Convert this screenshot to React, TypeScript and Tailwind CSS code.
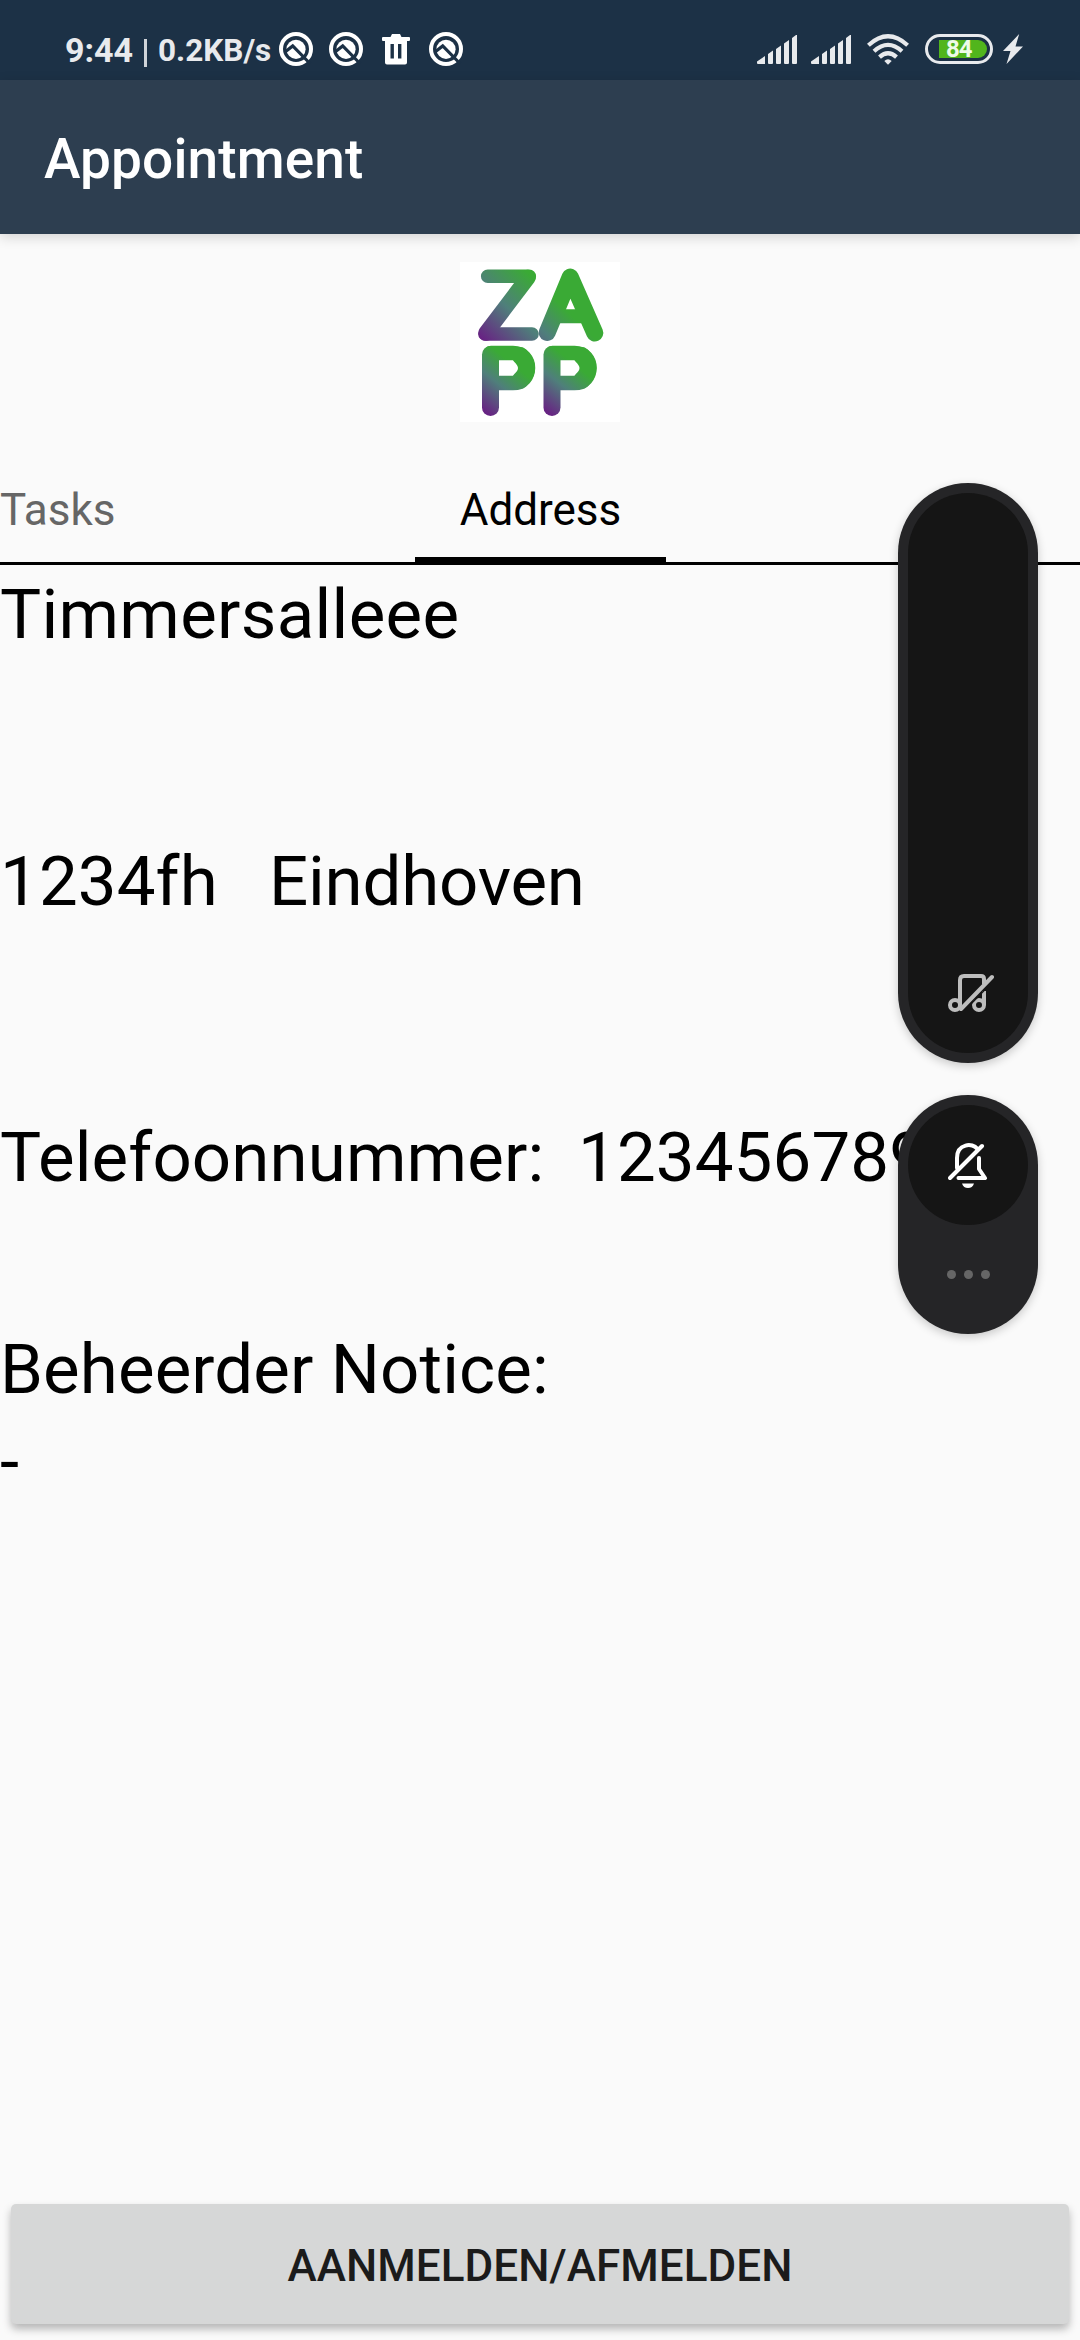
import React from "react";

function QIcon({ className = "" }: { className?: string }) {
  return (
    <svg viewBox="0 0 34 34" className={`h-[34px] w-[34px] shrink-0 ${className}`}>
      <circle cx="17" cy="17" r="15" fill="none" stroke="#fff" strokeWidth="4" />
      <circle cx="17" cy="17.300" r="9.600" fill="#fff" />
      <path d="M6 20 13.700 14 31 31.500" fill="none" stroke="#1c3146" strokeWidth="3.200" />
    </svg>
  );
}

function TrashIcon() {
  return (
    <svg viewBox="0 0 28 31" className="h-[31px] w-7 shrink-0">
      <path
        fillRule="evenodd"
        fill="#fff"
        d="M10 0h8l1.500 3H27q1 0 1 1v2q0 1-1 1h-2v21.500q0 2-2 2H5q-2 0-2-2V7H1Q0 7 0 6V4q0-1 1-1h7.500ZM8.500 10v14.500h3.400V10ZM16 10v14.500h3.400V10Z"
      />
    </svg>
  );
}

function Signal() {
  return (
    <svg viewBox="0 0 40 29" className="h-[29px] w-10 shrink-0" fill="#e8eaed">
      <path d="M0 26.500 8 21v8H1q-1 0-1-1ZM11 19l5-3.500V28q0 1-1 1h-3q-1 0-1-1ZM19 14l5-3.500V28q0 1-1 1h-3q-1 0-1-1ZM27 8.500 32 5v23q0 1-1 1h-3q-1 0-1-1ZM35 3l4-3h1v28q0 1-1 1h-3q-1 0-1-1Z" />
    </svg>
  );
}

function Wifi() {
  return (
    <svg viewBox="0 0 42 31" className="h-[31px] w-[42px] shrink-0" fill="none" stroke="#e8eaed" strokeWidth="4.200">
      <path d="M1.400 11.200Q21-6.800 40.600 11.200M7 17.200Q21 4.500 35 17.200M12.500 23.100Q21 15.400 29.500 23.100" />
      <path d="M17.300 27Q21 23.700 24.700 27L21 30.700Z" fill="#e8eaed" stroke="none" />
    </svg>
  );
}

function Battery() {
  return (
    <div className="flex h-[30px] w-[68px] shrink-0 items-center rounded-full border-[3px] border-[#e8eaed] pl-[11px]">
      <div className="flex h-[18px] w-12 items-center rounded-l-[2px] rounded-r-full bg-[#51b51c] pl-[7px] text-[24px] leading-none font-bold tracking-[-1px] text-[#eefbe8]">
        84
      </div>
    </div>
  );
}

function StatusBar() {
  return (
    <div className="flex h-20 bg-[#1c3146]">
      <div className="flex h-[98px] w-full items-center pl-[65px] text-[#e8eaed]">
        <span className="w-[79px] pt-[2px] text-[34px] leading-none font-bold whitespace-nowrap">9:44</span>
        <span className="mt-[7px] h-7 w-[3px] bg-[#d0d4d9]" />
        <span className="ml-[11px] w-[121px] pt-[3px] text-[31.500px] leading-none font-bold whitespace-nowrap">
          0.2KB/s
        </span>
        <QIcon />
        <QIcon className="ml-4" />
        <span className="ml-[19px] flex">
          <TrashIcon />
        </span>
        <QIcon className="ml-[19px]" />
        <div className="ml-[294px] flex items-center">
          <Signal />
          <span className="ml-[14px] flex">
            <Signal />
          </span>
          <span className="ml-4 flex">
            <Wifi />
          </span>
          <span className="ml-4 flex">
            <Battery />
          </span>
          <svg viewBox="0 0 20 30" className="ml-[10px] h-[30px] w-5 shrink-0" fill="#e8eaed">
            <path d="M16.200 0 0 17h7.500L3.500 30 20 12.500h-7.500Z" />
          </svg>
        </div>
      </div>
    </div>
  );
}

function Logo() {
  return (
    <svg viewBox="0 0 160 160" className="h-40 w-40 bg-white" fill="none" strokeLinecap="round" strokeLinejoin="round">
      <defs>
        <linearGradient id="z" gradientUnits="userSpaceOnUse" x1="22" y1="76" x2="76" y2="18">
          <stop offset="0" stopColor="#672483" />
          <stop offset="0.5" stopColor="#4f7f7b" />
          <stop offset="1" stopColor="#3aaa35" />
        </linearGradient>
        <linearGradient id="a" gradientUnits="userSpaceOnUse" x1="72" y1="86" x2="108" y2="50">
          <stop offset="0" stopColor="#5d5585" />
          <stop offset="0.4" stopColor="#4f7f7b" />
          <stop offset="1" stopColor="#3aaa35" />
        </linearGradient>
        <linearGradient id="p" gradientUnits="userSpaceOnUse" x1="26" y1="150" x2="60" y2="108">
          <stop offset="0" stopColor="#672483" />
          <stop offset="0.550" stopColor="#4f7f7b" />
          <stop offset="1" stopColor="#3aaa35" />
        </linearGradient>
      </defs>
      <g stroke="url(#z)">
        <path d="M27.700 14.300H69.300M25 72H72" strokeWidth="13.600" />
        <path d="M68 15.500 26 71" strokeWidth="15.500" />
      </g>
      <g stroke="url(#a)">
        <path d="M87.200 70.500 110.200 15 134.800 71" strokeWidth="17" />
        <path d="M96 54.200h28" strokeWidth="14" />
      </g>
      <g stroke="url(#p)">
        <path d="M30.500 145.500V92.500" strokeWidth="17" />
        <path d="M31 91H53C73 91 73 121 53 121H36" strokeWidth="14.500" />
        <path d="M60 93.500Q73 106 60 118.500" strokeWidth="17" />
      </g>
      <g stroke="url(#p)" transform="translate(61.500 0)">
        <path d="M30.500 145.500V92.500" strokeWidth="17" />
        <path d="M31 91H53C73 91 73 121 53 121H36" strokeWidth="14.500" />
        <path d="M60 93.500Q73 106 60 118.500" strokeWidth="17" />
      </g>
    </svg>
  );
}

function VolumeOverlay() {
  return (
    <div className="absolute top-[483px] left-[898px] flex w-[140px] flex-col gap-8">
      <div className="h-[580px] rounded-full bg-[#252527] p-[10px] shadow-[0_3px_10px_rgba(0,0,0,0.2)]">
        <div className="flex h-full items-end justify-center rounded-full bg-[#151515] pb-10">
          <svg viewBox="0 0 46 40" className="ml-[6px] h-10 w-[46px]" fill="none" stroke="#bdbdbd" strokeWidth="4">
            <circle cx="7" cy="32" r="5" />
            <circle cx="31" cy="32" r="5" />
            <path d="M12 32V7q0-4 4-4h17q3 0 3 3v5M36 32V18" />
            <path d="M13 36 44 4" strokeLinecap="round" />
            <path d="M17.500 36.500 42 11.500" stroke="#151515" strokeWidth="1.500" />
          </svg>
        </div>
      </div>
      <div className="h-[239px] rounded-full bg-[#252527] p-[10px] shadow-[0_3px_10px_rgba(0,0,0,0.2)]">
        <div className="flex h-[120px] items-center justify-center rounded-full bg-[#151515]">
          <svg viewBox="0 0 40 45" className="h-[45px] w-10" fill="none" stroke="#fff" strokeWidth="4" strokeLinecap="round" strokeLinejoin="round">
            <path d="M9 25V15C9 0 25 0 29 5.500M31 15V26L37 35H10.500" />
            <path d="M2 35 34 3" />
            <path d="M14 40.500h12q-1.500 4.500-6 4.500t-6-4.500Z" fill="#fff" stroke="none" />
          </svg>
        </div>
        <div className="mt-[45px] flex justify-center gap-2">
          <span className="h-[9px] w-[9px] rounded-full bg-[#666]" />
          <span className="h-[9px] w-[9px] rounded-full bg-[#666]" />
          <span className="h-[9px] w-[9px] rounded-full bg-[#666]" />
        </div>
      </div>
    </div>
  );
}

export default function App() {
  return (
    <div className="relative flex h-[2340px] w-[1080px] flex-col overflow-hidden bg-[#fafafa] font-[Roboto,sans-serif] text-black">
      <StatusBar />
      <header className="flex h-[154px] items-center bg-[#2d3e50] pt-1 pl-11 shadow-[0_3px_12px_rgba(0,0,0,0.16)]">
        <h1 className="text-[55px] leading-[64px] font-medium tracking-[0.100px] text-white">Appointment</h1>
      </header>
      <div className="mt-7 flex justify-center">
        <Logo />
      </div>
      <nav className="mt-[35px] flex h-[108px] border-b-[3px] border-black text-[44px] leading-[52px]">
        <div className="w-[415px] pt-[27px] text-[#666]">Tasks</div>
        <div className="h-[105px] w-[251px] border-b-[5px] border-black pt-[27px] text-center">Address</div>
      </nav>
      <main className="flex flex-1 flex-col text-[69px] leading-[80px] tracking-[0.120px] whitespace-pre">
        <p className="mt-[10px] tracking-[0.300px]">Timmersalleee</p>
        <p className="mt-[187px] flex">
          <span className="w-[269px]">1234fh</span>
          <span className="tracking-[-0.200px]">Eindhoven</span>
        </p>
        <p className="mt-[196px] flex">
          <span className="w-[578px]">Telefoonnummer:</span>
          <span>123456789</span>
        </p>
        <p className="mt-[132px]">Beheerder Notice:</p>
        <p className="mt-[12px]">-</p>
      </main>
      <button className="mx-[11px] mb-4 flex h-[120px] items-center justify-center rounded-[5px] bg-[#d6d7d7] pt-1 text-[44px] leading-[52px] font-medium tracking-[0.060px] text-[#1b1b1b] shadow-[0_5px_8px_rgba(0,0,0,0.28)]">
        AANMELDEN/AFMELDEN
      </button>
      <VolumeOverlay />
    </div>
  );
}
